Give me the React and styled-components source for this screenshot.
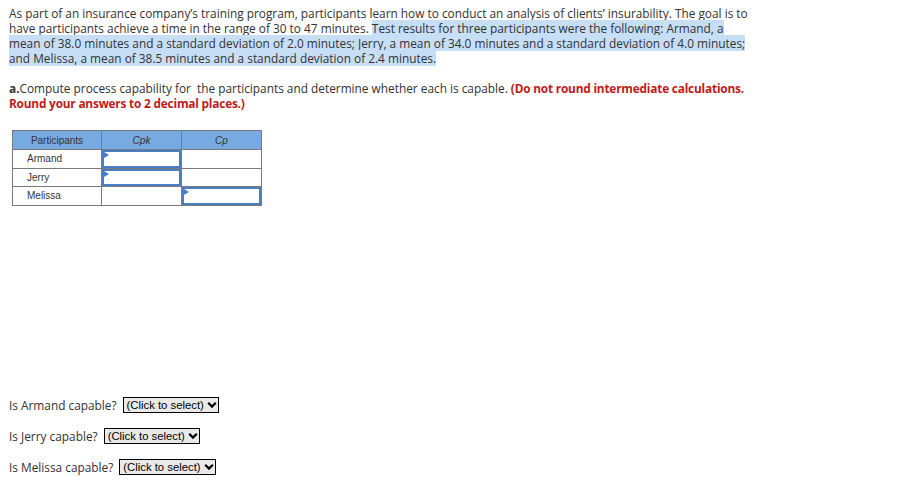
import React from "react";
import styled, { createGlobalStyle } from "styled-components";

const GlobalStyle = createGlobalStyle`
  html, body {
    margin: 0;
    padding: 0;
    background: #ffffff;
  }
  body {
    font-family: "Open Sans", "Liberation Sans", Arial, sans-serif;
    color: #333333;
  }
`;

const Page = styled.div`
  padding: 6px 9px 0 9px;
  width: 890px;
  box-sizing: border-box;
`;

const Paragraph = styled.p`
  margin: 0;
  font-size: 11.85px;
  line-height: 15px;
  white-space: nowrap;
`;

const Marked = styled.span`
  background: #c7def7;
`;

const Question = styled(Paragraph)`
  margin-top: 15px;
`;

const Strong = styled.b`
  font-weight: 700;
`;

const Warning = styled.b`
  color: #c01b1b;
  font-weight: 700;
  letter-spacing: -0.2px;
`;

const Table = styled.table`
  margin: 19px 0 0 3px;
  border-collapse: collapse;
  font-family: "Liberation Sans", Arial, sans-serif;
  font-size: 10px;
  color: #333;
`;

const Head = styled.th`
  background: #77aae3;
  border: 1px solid #7a7a7a;
  height: 18px;
  padding: 0;
  font-weight: 400;
  font-style: ${(p) => (p.$italic ? "italic" : "normal")};
  width: ${(p) => p.$w}px;
  text-align: center;
`;

const Cell = styled.td`
  border: 1px solid #7a7a7a;
  height: 17.5px;
  padding: 0 0 0 14px;
  box-sizing: border-box;
`;

const InputCell = styled.td`
  border: 1px solid #7a7a7a;
  height: 17.5px;
  padding: 0;
  position: relative;
`;

const AnswerBox = styled.div`
  position: absolute;
  inset: 0;
  border: 2px solid #4a7ec2;
  background: #fff;
  &::before {
    content: "";
    position: absolute;
    left: 0;
    top: 0;
    border-left: 5px solid #3e7fd0;
    border-top: 3px solid transparent;
    border-bottom: 3px solid transparent;
  }
`;

const Answers = styled.div`
  margin-top: 190px;
  display: flex;
  flex-direction: column;
  gap: 13px;
`;

const AnswerRow = styled.div`
  display: flex;
  align-items: center;
  gap: 6px;
  font-size: 11.85px;
  height: 18px;
`;

const Select = styled.div`
  display: flex;
  align-items: center;
  gap: 3px;
  height: 16px;
  box-sizing: border-box;
  border: 1px solid #000;
  background: #e9e9e9;
  padding: 0 1px 0 3px;
  font-family: "Liberation Sans", Arial, sans-serif;
  font-size: 11.3px;
  color: #000;
`;

const Chevron = () => (
  <svg width="10" height="8" viewBox="0 0 10 8">
    <path d="M1.2 1.8 L5 5.6 L8.8 1.8" fill="none" stroke="#000" strokeWidth="2.2" />
  </svg>
);

const participants = [
  { name: "Armand", cpk: true, cp: false },
  { name: "Jerry", cpk: true, cp: false },
  { name: "Melissa", cpk: false, cp: true },
];

export default function App() {
  return (
    <>
      <GlobalStyle />
      <Page>
        <Paragraph>
          As part of an insurance company’s training program, participants learn how to conduct an
          analysis of clients’ insurability. The goal is to
          <br />
          have participants achieve a time in the range of 30 to 47 minutes.{" "}
          <Marked>
            Test results for three participants were the following: Armand, a{" "}
            <br />
            mean of 38.0 minutes and a standard deviation of 2.0 minutes; Jerry, a mean of 34.0
            minutes and a standard deviation of 4.0 minutes;
            <br />
            and Melissa, a mean of 38.5 minutes and a standard deviation of 2.4 minutes.
          </Marked>
        </Paragraph>
        <Question>
          <Strong>a.</Strong>Compute process capability for&nbsp; the participants and determine
          whether each is capable. <Warning>(Do not round intermediate calculations.</Warning>
          <br />
          <Warning>Round your answers to 2 decimal places.)</Warning>
        </Question>
        <Table>
          <thead>
            <tr>
              <Head $w={88}>Participants</Head>
              <Head $w={79} $italic>
                Cpk
              </Head>
              <Head $w={79} $italic>
                Cp
              </Head>
            </tr>
          </thead>
          <tbody>
            {participants.map((p) => (
              <tr key={p.name}>
                <Cell>{p.name}</Cell>
                {p.cpk ? (
                  <InputCell>
                    <AnswerBox />
                  </InputCell>
                ) : (
                  <Cell />
                )}
                {p.cp ? (
                  <InputCell>
                    <AnswerBox />
                  </InputCell>
                ) : (
                  <Cell />
                )}
              </tr>
            ))}
          </tbody>
        </Table>
        <Answers>
          {participants.map((p) => (
            <AnswerRow key={p.name}>
              Is {p.name} capable?
              <Select>
                (Click to select)
                <Chevron />
              </Select>
            </AnswerRow>
          ))}
        </Answers>
      </Page>
    </>
  );
}
